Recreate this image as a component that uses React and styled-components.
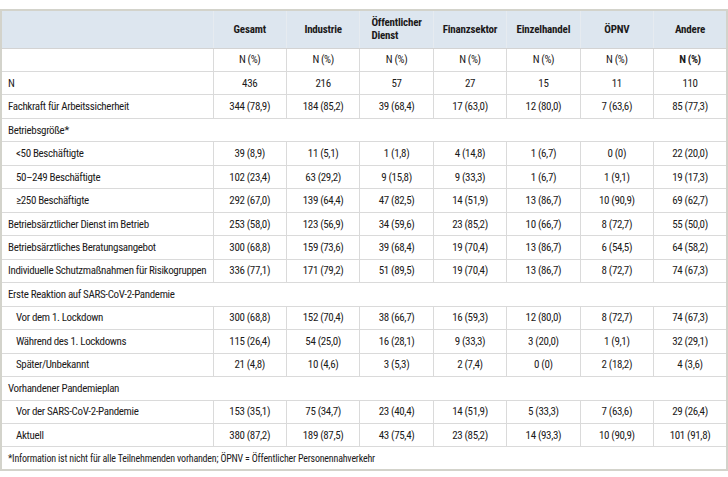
import React from 'react';
import styled, { createGlobalStyle } from 'styled-components';

const GlobalStyle = createGlobalStyle`
  html, body {
    margin: 0;
    padding: 0;
    background: #fff;
  }
  body {
    font-family: "Roboto Condensed", "Open Sans Condensed", "Liberation Sans Narrow", "Arial Narrow", "Open Sans", sans-serif;
    font-stretch: condensed;
    color: #1c1a1a;
  }
`;

const columns = ['Gesamt', 'Industrie', 'Öffentlicher Dienst', 'Finanzsektor', 'Einzelhandel', 'ÖPNV', 'Andere'];

const rows = [
  { label: 'N', values: ['436', '216', '57', '27', '15', '11', '110'] },
  { label: 'Fachkraft für Arbeitssicherheit', values: ['344 (78,9)', '184 (85,2)', '39 (68,4)', '17 (63,0)', '12 (80,0)', '7 (63,6)', '85 (77,3)'] },
  { group: 'Betriebsgröße*' },
  { label: '<50 Beschäftigte', indent: true, values: ['39 (8,9)', '11 (5,1)', '1 (1,8)', '4 (14,8)', '1 (6,7)', '0 (0)', '22 (20,0)'] },
  { label: '50–249 Beschäftigte', indent: true, values: ['102 (23,4)', '63 (29,2)', '9 (15,8)', '9 (33,3)', '1 (6,7)', '1 (9,1)', '19 (17,3)'] },
  { label: '≥250 Beschäftigte', indent: true, values: ['292 (67,0)', '139 (64,4)', '47 (82,5)', '14 (51,9)', '13 (86,7)', '10 (90,9)', '69 (62,7)'] },
  { label: 'Betriebsärztlicher Dienst im Betrieb', values: ['253 (58,0)', '123 (56,9)', '34 (59,6)', '23 (85,2)', '10 (66,7)', '8 (72,7)', '55 (50,0)'] },
  { label: 'Betriebsärztliches Beratungsangebot', values: ['300 (68,8)', '159 (73,6)', '39 (68,4)', '19 (70,4)', '13 (86,7)', '6 (54,5)', '64 (58,2)'] },
  { label: 'Individuelle Schutzmaßnahmen für Risikogruppen', values: ['336 (77,1)', '171 (79,2)', '51 (89,5)', '19 (70,4)', '13 (86,7)', '8 (72,7)', '74 (67,3)'] },
  { group: 'Erste Reaktion auf SARS-CoV-2-Pandemie' },
  { label: 'Vor dem 1. Lockdown', indent: true, values: ['300 (68,8)', '152 (70,4)', '38 (66,7)', '16 (59,3)', '12 (80,0)', '8 (72,7)', '74 (67,3)'] },
  { label: 'Während des 1. Lockdowns', indent: true, values: ['115 (26,4)', '54 (25,0)', '16 (28,1)', '9 (33,3)', '3 (20,0)', '1 (9,1)', '32 (29,1)'] },
  { label: 'Später/Unbekannt', indent: true, values: ['21 (4,8)', '10 (4,6)', '3 (5,3)', '2 (7,4)', '0 (0)', '2 (18,2)', '4 (3,6)'] },
  { group: 'Vorhandener Pandemieplan' },
  { label: 'Vor der SARS-CoV-2-Pandemie', indent: true, values: ['153 (35,1)', '75 (34,7)', '23 (40,4)', '14 (51,9)', '5 (33,3)', '7 (63,6)', '29 (26,4)'] },
  { label: 'Aktuell', indent: true, values: ['380 (87,2)', '189 (87,5)', '43 (75,4)', '23 (85,2)', '14 (93,3)', '10 (90,9)', '101 (91,8)'] },
];

const App = () => (
  <Page>
    <GlobalStyle />
    <Table>
      <colgroup>
        <col style={{ width: 212 }} />
        {columns.map((c) => (
          <col key={c} />
        ))}
      </colgroup>
      <thead>
        <HeadRow>
          <HeadCell />
          {columns.map((c) => (
            <HeadCell key={c}>
              <HeadText>
                {c === 'Öffentlicher Dienst' ? (
                  <>
                    Öffentlicher
                    <br />
                    Dienst
                  </>
                ) : (
                  c
                )}
              </HeadText>
            </HeadCell>
          ))}
        </HeadRow>
      </thead>
      <tbody>
        <Row>
          <LabelCell />
          {columns.map((c, i) => (
            <ValueCell key={c} $bold={i === columns.length - 1}>
              N (%)
            </ValueCell>
          ))}
        </Row>
        {rows.map((r, idx) =>
          r.group ? (
            <Row key={idx}>
              <GroupCell colSpan={8}>{r.group}</GroupCell>
            </Row>
          ) : (
            <Row key={idx}>
              <LabelCell $indent={r.indent}>{r.label}</LabelCell>
              {r.values.map((v, i) => (
                <ValueCell key={i}>{v}</ValueCell>
              ))}
            </Row>
          )
        )}
        <FootRow>
          <FootCell colSpan={8}>
            *Information ist nicht für alle Teilnehmenden vorhanden; ÖPNV = Öffentlicher Personennahverkehr
          </FootCell>
        </FootRow>
      </tbody>
    </Table>
  </Page>
);

export default App;

const Page = styled.div`
  width: 728px;
  height: 477px;
  padding-top: 9px;
  box-sizing: border-box;
  overflow: hidden;
`;

const Table = styled.table`
  width: 728px;
  table-layout: fixed;
  border-collapse: collapse;
  border: 2px solid #d3d3cb;
  font-size: 11px;
  line-height: 13px;
  letter-spacing: -0.35px;
`;

const HeadRow = styled.tr`
  height: 38px;
  background: #dde6ef;
`;

const HeadCell = styled.th`
  border-left: 1px solid #e6ebf0;
  border-bottom: 1px solid #d3d3d3;
  text-align: center;
  vertical-align: middle;
  font-weight: bold;
  letter-spacing: -0.2px;
  padding: 0 4px;
`;

const HeadText = styled.span`
  display: inline-block;
  text-align: left;
`;

const Row = styled.tr`
  height: 23.47px;
`;

const LabelCell = styled.td`
  border-bottom: 1px solid #dadada;
  padding: 0 0 0 ${(p) => (p.$indent ? '14px' : '6px')};
  white-space: nowrap;
  text-align: left;
`;

const ValueCell = styled.td`
  border-left: 1px solid #dadada;
  border-bottom: 1px solid #dadada;
  text-align: center;
  padding: 0;
  white-space: nowrap;
  font-weight: ${(p) => (p.$bold ? 'bold' : 'normal')};
`;

const GroupCell = styled.td`
  border-bottom: 1px solid #dadada;
  padding: 0 0 0 6px;
  text-align: left;
`;

const FootRow = styled.tr`
  height: 23px;
`;

const FootCell = styled.td`
  padding: 0 0 0 6px;
  font-size: 10px;
  letter-spacing: -0.2px;
  text-align: left;
`;
